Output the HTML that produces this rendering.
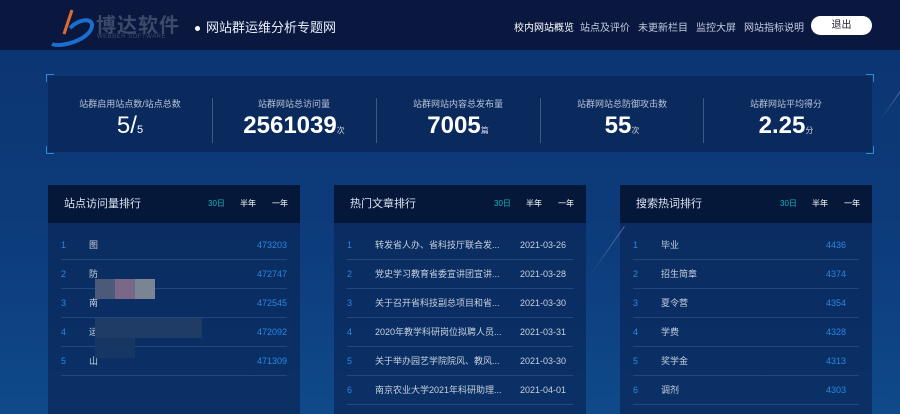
<!DOCTYPE html>
<html style="overflow:hidden;width:900px;height:414px;background:#0d3c7c"><head><meta charset="utf-8"><style>
*{margin:0;padding:0;box-sizing:border-box}
body{width:900px;height:414px;overflow:hidden;font-family:"Liberation Sans","Noto Sans CJK SC",sans-serif;background:linear-gradient(180deg,#0c3470 0%,#0d3c7c 60%,#0f4a8a 100%);position:relative;color:#fff}
.hd{position:absolute;left:0;top:0;width:900px;height:50px;background:#0a1840}
.logo{position:absolute;left:50px;top:8px}
.brand{position:absolute;left:96px;top:9px;font-size:20px;color:#3b4a6a;letter-spacing:1px;font-weight:bold}
.brand2{position:absolute;left:97px;top:34px;font-size:6px;color:#3b4a6a;letter-spacing:.5px}
.title{position:absolute;left:195px;top:17px;font-size:13px;color:#e8eef8}
.title:before{content:"";display:inline-block;width:5px;height:5px;border-radius:50%;background:#fff;margin-right:6px;vertical-align:middle}
.nav{position:absolute;top:19px;font-size:10px;color:#c4cbe0;white-space:nowrap}
.btn{position:absolute;left:811px;top:16px;width:61px;height:19px;background:#fff;border-radius:10px;color:#223;font-size:10px;text-align:center;line-height:19px}
.stats{position:absolute;left:48px;top:76px;width:824px;height:76px;background:#0a2a5e}
.cb{position:absolute;width:8px;height:8px;border-color:#2b8ad0;border-style:solid}
.st{position:absolute;top:0;width:164px;text-align:center}
.st .l{font-size:9px;color:#b9c4d8;margin-top:21px}
.st .v{font-size:24px;font-weight:bold;margin-top:2px}
.st .v small{font-size:8px;font-weight:normal;color:#ccd}
.dv{position:absolute;top:22px;width:1px;height:45px;background:#3a5a8a}
.pn{position:absolute;top:185px;width:252px;height:229px;background:rgba(10,40,90,.75)}
.ph{height:38px;background:#06183a;position:relative;font-size:11px;color:#dde4f0;line-height:38px;padding-left:16px}
.tb{position:absolute;top:0;font-size:8px;color:#fff}
.row{position:absolute;left:13px;right:13px;height:29px;border-bottom:1px solid #23477a;font-size:9px;line-height:29px}
.n{position:absolute;left:0;color:#2d86e0}
.t{position:absolute;left:28px;color:#c8d0de}
.r{position:absolute;right:0;color:#2d86e0}
.d{position:absolute;right:7px;color:#c8d0de}
.streak{position:absolute;height:1px;background:linear-gradient(90deg,transparent,rgba(180,170,200,.5));transform-origin:left}
</style></head><body>
<div class="hd">
<svg class="logo" width="48" height="40" viewBox="0 0 48 40"><path d="M22 2 L14 26" stroke="#e06a30" stroke-width="3" fill="none"/><path d="M2 36 C10 40 40 32 42 18 C43 10 30 10 20 20" stroke="#1a6ed0" stroke-width="4" fill="none"/></svg>
<div class="brand">博达软件</div><div class="brand2">WEBBER SOFTWARE</div>
<div class="title">网站群运维分析专题网</div>
<div class="nav" style="left:514px;color:#fff">校内网站概览</div>
<div class="nav" style="left:580px">站点及评价</div>
<div class="nav" style="left:638px">未更新栏目</div>
<div class="nav" style="left:696px">监控大屏</div>
<div class="nav" style="left:744px">网站指标说明</div>
<div class="btn">退出</div>
</div>
<div class="stats">
<div class="cb" style="left:-2px;top:-2px;border-width:1px 0 0 1px"></div>
<div class="cb" style="left:-2px;bottom:-2px;border-width:0 0 1px 1px"></div>
<div class="cb" style="right:-2px;top:-2px;border-width:1px 1px 0 0"></div>
<div class="cb" style="right:-2px;bottom:-2px;border-width:0 1px 1px 0"></div>
<div class="st" style="left:0"><div class="l">站群启用站点数/站点总数</div><div class="v" style="font-weight:normal">5/<small style="font-size:11px;color:#fff">5</small></div></div>
<div class="st" style="left:164px"><div class="l">站群网站总访问量</div><div class="v">2561039<small>次</small></div></div>
<div class="st" style="left:328px"><div class="l">站群网站内容总发布量</div><div class="v">7005<small>篇</small></div></div>
<div class="st" style="left:492px"><div class="l">站群网站总防御攻击数</div><div class="v">55<small>次</small></div></div>
<div class="st" style="left:656px"><div class="l">站群网站平均得分</div><div class="v">2.25<small>分</small></div></div>
<div class="dv" style="left:164px"></div><div class="dv" style="left:328px"></div><div class="dv" style="left:492px"></div><div class="dv" style="left:655px"></div>
</div>

<div class="pn" style="left:48px"><div class="ph">站点访问量排行<span class="tb" style="left:160px;color:#14b4c0">30日</span><span class="tb" style="left:192px">半年</span><span class="tb" style="left:224px">一年</span></div>
<div class="row" style="top:46px"><span class="n">1</span><span class="t">图</span><span class="r">473203</span></div>
<div class="row" style="top:75px"><span class="n">2</span><span class="t">防</span><span class="r">472747</span></div>
<div class="row" style="top:104px"><span class="n">3</span><span class="t">南</span><span class="r">472545</span></div>
<div class="row" style="top:133px"><span class="n">4</span><span class="t">运</span><span class="r">472092</span></div>
<div class="row" style="top:162px"><span class="n">5</span><span class="t">山</span><span class="r">471309</span></div>
<div style="position:absolute;left:47px;top:94px;width:20px;height:20px;background:#4a5a78"></div>
<div style="position:absolute;left:67px;top:94px;width:20px;height:20px;background:#7a6888"></div>
<div style="position:absolute;left:87px;top:94px;width:20px;height:20px;background:#7a8494"></div>
<div style="position:absolute;left:47px;top:133px;width:107px;height:20px;background:#1f3c66"></div>
<div style="position:absolute;left:47px;top:153px;width:40px;height:20px;background:#163663"></div>
</div>

<div class="pn" style="left:334px"><div class="ph">热门文章排行<span class="tb" style="left:160px;color:#14b4c0">30日</span><span class="tb" style="left:192px">半年</span><span class="tb" style="left:224px">一年</span></div>
<div class="row" style="top:46px"><span class="n">1</span><span class="t">转发省人办、省科技厅联合发...</span><span class="d">2021-03-26</span></div>
<div class="row" style="top:75px"><span class="n">2</span><span class="t">党史学习教育省委宣讲团宣讲...</span><span class="d">2021-03-28</span></div>
<div class="row" style="top:104px"><span class="n">3</span><span class="t">关于召开省科技副总项目和省...</span><span class="d">2021-03-30</span></div>
<div class="row" style="top:133px"><span class="n">4</span><span class="t">2020年教学科研岗位拟聘人员...</span><span class="d">2021-03-31</span></div>
<div class="row" style="top:162px"><span class="n">5</span><span class="t">关于举办园艺学院院风、教风...</span><span class="d">2021-03-30</span></div>
<div class="row" style="top:191px"><span class="n">6</span><span class="t">南京农业大学2021年科研助理...</span><span class="d">2021-04-01</span></div>
</div>

<div class="pn" style="left:620px"><div class="ph">搜索热词排行<span class="tb" style="left:160px;color:#14b4c0">30日</span><span class="tb" style="left:192px">半年</span><span class="tb" style="left:224px">一年</span></div>
<div class="row" style="top:46px"><span class="n">1</span><span class="t">毕业</span><span class="r" style="right:13px">4436</span></div>
<div class="row" style="top:75px"><span class="n">2</span><span class="t">招生简章</span><span class="r" style="right:13px">4374</span></div>
<div class="row" style="top:104px"><span class="n">3</span><span class="t">夏令营</span><span class="r" style="right:13px">4354</span></div>
<div class="row" style="top:133px"><span class="n">4</span><span class="t">学费</span><span class="r" style="right:13px">4328</span></div>
<div class="row" style="top:162px"><span class="n">5</span><span class="t">奖学金</span><span class="r" style="right:13px">4313</span></div>
<div class="row" style="top:191px"><span class="n">6</span><span class="t">调剂</span><span class="r" style="right:13px">4303</span></div>
</div>
<div class="streak" style="left:590px;top:275px;width:60px;transform:rotate(-55deg)"></div>
<div class="streak" style="left:880px;top:120px;width:40px;transform:rotate(-55deg)"></div>
</body></html>
